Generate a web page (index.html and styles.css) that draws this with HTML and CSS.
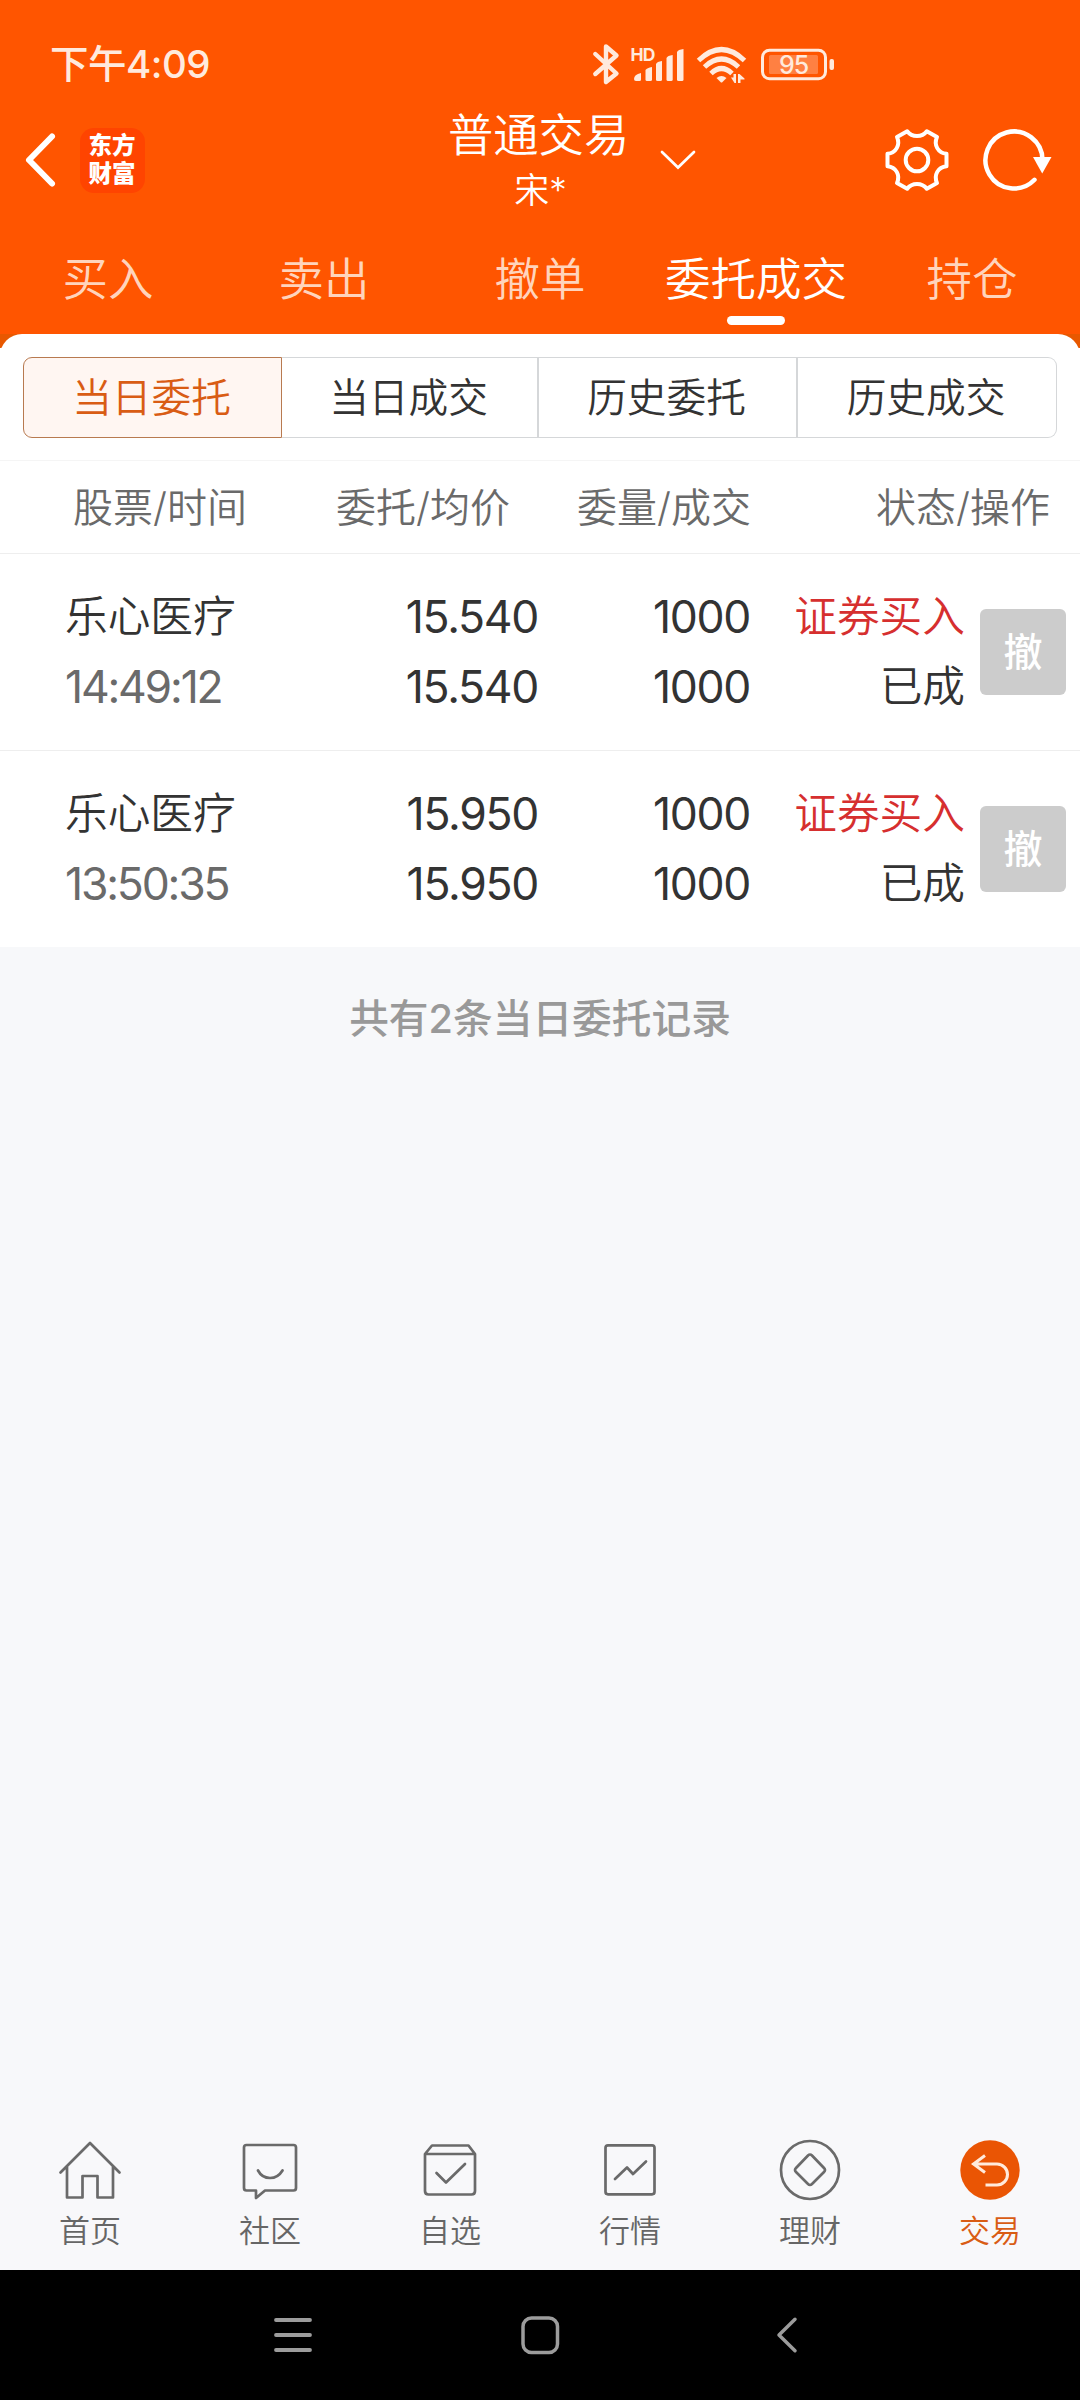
FILE: index.html
```html
<!DOCTYPE html>
<html lang="zh-CN">
<head>
<meta charset="utf-8">
<title>普通交易</title>
<link rel="stylesheet" href="styles.css">
</head>
<body>
<div class="app">
  <header class="header">
    <div class="status">
      <span class="clock">下午4:09</span>
      <svg class="status-icons" width="246" height="46" viewBox="590 42 246 46" fill="none">
        <path d="M595.3 54 L616.5 73.500 L606 82 V46.500 L616.5 55.500 L595.300 74" stroke="#ffeadd" stroke-width="4.400" stroke-linejoin="round" stroke-linecap="round"/>
        <text class="hd" x="630.500" y="60.800">HD</text>
        <g fill="#ffeadd">
          <path d="M634 79 Q634 74.500 641 73 V79.500 Q641 81 639.500 81 H636 Q634 81 634 79Z"/>
          <path d="M645.500 70 Q647 68 652 67 V79.500 Q652 81 650.500 81 H647 Q645.500 81 645.500 79.500Z"/>
          <path d="M656 64 Q657 61.500 662 61 V79.500 Q662 81 660.500 81 H657.500 Q656 81 656 79.500Z"/>
          <path d="M666.500 58 Q667.500 55.500 672.700 55 V79.500 Q672.700 81 671.200 81 H668 Q666.500 81 666.500 79.500Z"/>
          <path d="M677 52 Q678 49.500 683.500 49 V79.500 Q683.500 81 682 81 H678.500 Q677 81 677 79.500Z"/>
          <path d="M716.500 78 Q721.500 74 726.500 78 L722.500 82 Q721.500 83 720.500 82Z"/>
          <path d="M731 77.500 H733.500 V74 H736 V83 H734.500Z M738 83 V74 H739.500 L744.500 78.500 V79.500 H740.500 V83Z"/>
        </g>
        <g stroke="#ffeadd" stroke-width="5">
          <path d="M698.500 60.500 Q721.500 38.500 744.500 60.500"/>
          <path d="M704.500 67 Q721.500 51 738.500 67"/>
          <path d="M711 73.500 Q721.500 63.500 732 73.500"/>
        </g>
        <rect x="762.500" y="50.200" width="63" height="28.600" rx="7" stroke="#ffeadd" stroke-width="3"/>
        <rect x="769" y="55" width="49" height="19" rx="1.500" fill="#ff8042"/>
        <rect x="829.500" y="59" width="4.500" height="11" rx="2" fill="#ffeadd"/>
        <text class="battery" x="793.500" y="73.800" text-anchor="middle">95</text>
      </svg>
    </div>
    <div class="titlebar">
      <div class="left">
        <svg width="34" height="60" viewBox="0 0 34 60" fill="none" stroke="#fff" stroke-width="6" stroke-linecap="round" stroke-linejoin="round"><path d="M28 6.500 L5 30 L28 53.500"/></svg>
        <div class="logo"><span>东方</span><span>财富</span></div>
      </div>
      <div class="title"><h1>普通交易</h1><p>宋*</p></div>
      <div class="right">
        <svg class="caret" width="38" height="22" viewBox="0 0 38 22" fill="none" stroke="#fff" stroke-width="2.700" stroke-linecap="round"><path d="M3 3 L19 18.500 L35 3"/></svg>
        <svg class="gear" width="70" height="70" viewBox="-35 -35 70 70" fill="none" stroke="#fff" stroke-width="4" stroke-linejoin="round">
          <path d="M-9.800 -28.800 C-5 -22.500 5 -22.500 9.800 -28.800 L20 -23 C16.500 -15 21 -6.900 29.500 -6.200 V6.200 C21 6.900 16.500 15 20 23 L9.800 28.800 C5 22.500 -5 22.500 -9.800 28.800 L-20 23 C-16.500 15 -21 6.900 -29.500 6.200 V-6.200 C-21 -6.900 -16.500 -15 -20 -23Z"/>
          <circle r="11.300"/>
        </svg>
        <svg class="refresh" width="74" height="70" viewBox="-35 -35 74 70" fill="none"><path d="M20.500 19.800 A28.500 28.500 0 1 1 28.500 0" stroke="#fff" stroke-width="4.500" stroke-linecap="round"/><path d="M19 -3 H37.500 L28.200 13.500Z" fill="#fff"/></svg>
      </div>
    </div>
    <nav class="tabs">
      <span>买入</span><span>卖出</span><span>撤单</span><span class="on">委托成交</span><span>持仓</span>
    </nav>
  </header>

  <main class="content">
    <div class="corner-bg">
      <section class="panel">
        <div class="segments">
          <span class="on">当日委托</span><span>当日成交</span><span>历史委托</span><span>历史成交</span>
        </div>
        <div class="thead"><span>股票/时间</span><span>委托/均价</span><span>委量/成交</span><span>状态/操作</span></div>
        <div class="row">
          <div class="cell name"><b>乐心医疗</b><b class="time">14:49:12</b></div>
          <div class="cell"><b>15.540</b><b>15.540</b></div>
          <div class="cell"><b>1000</b><b>1000</b></div>
          <div class="cell"><b class="buy">证券买入</b><b>已成</b></div>
          <button class="cancel">撤</button>
        </div>
        <div class="row">
          <div class="cell name"><b>乐心医疗</b><b class="time">13:50:35</b></div>
          <div class="cell"><b>15.950</b><b>15.950</b></div>
          <div class="cell"><b>1000</b><b>1000</b></div>
          <div class="cell"><b class="buy">证券买入</b><b>已成</b></div>
          <button class="cancel">撤</button>
        </div>
      </section>
    </div>
    <p class="summary">共有2条当日委托记录</p>
  </main>

  <nav class="bottom">
    <a><svg viewBox="-35 -35 70 70"><path d="M-29.500 2.500 L0 -27 L29.500 2.500 M-23 -3 V27.500 H-7.500 V6 H7.500 V27.500 H23 V-3"/></svg>首页</a>
    <a><svg viewBox="-35 -35 70 70"><path d="M-23.500 -25 H23.500 Q26 -25 26 -22.500 V18 Q26 20.500 23.500 20.500 H-5 L-14 28 V20.500 H-23.500 Q-26 20.500 -26 18 V-22.500 Q-26 -25 -23.500 -25Z M-12 0.500 Q-8 8 0 8 Q8 8 12.500 0.500"/></svg>社区</a>
    <a><svg viewBox="-35 -35 70 70"><path d="M-25 -16 L-18 -24.500 H18.500 L25 -16 V21 Q25 24.500 21.500 24.500 H-21.500 Q-25 24.500 -25 21Z M-25 -16 H25 M-13.500 3 L-4 12.500 L15 -6"/></svg>自选</a>
    <a><svg viewBox="-35 -35 70 70"><rect x="-24.500" y="-24.700" width="49" height="49" rx="2.500"/><path d="M-15 9 L-3 -2.500 L3 4 L16 -8.500"/></svg>行情</a>
    <a><svg viewBox="-35 -35 70 70"><circle r="29"/><path d="M-14 -2 L-2 -14.500 Q0 -16.500 2 -14.500 L14 -2 Q16 0 14 2 L2 14 Q0 16 -2 14 L-14 2 Q-16 0 -14 -2Z"/></svg>理财</a>
    <a class="on"><svg viewBox="-35 -35 70 70"><circle class="disc" r="29.700"/><path class="arrow" d="M-5 -14.500 L-16.500 -6 L-5 2.500 M-15 -6 H7 A10.500 10.500 0 0 1 7 15 H-4.500"/></svg>交易</a>
  </nav>

  <footer class="system">
    <svg width="44" height="44" viewBox="-22 -22 44 44" stroke-width="3.800"><path d="M-17 -15 H17 M-17 0 H17 M-17 15 H17"/></svg>
    <svg width="44" height="44" viewBox="-22 -22 44 44" stroke-width="3.500"><rect x="-17" y="-17" width="34.500" height="34.500" rx="8.500"/></svg>
    <svg width="44" height="44" viewBox="-22 -22 44 44" stroke-width="3.500"><path d="M8 -15.700 L-8 0 L8 15.700"/></svg>
  </footer>
</div>
</body>
</html>
```
FILE: styles.css
```css
* { box-sizing: border-box; margin: 0; padding: 0; }
body {
  width: 1080px;
  font-family: Inter, "Noto Sans CJK SC", sans-serif;
  font-weight: 350;
  color: #333;
}
svg { display: block; flex: none; }
.app { width: 1080px; height: 2400px; display: flex; flex-direction: column; background: #f7f8fa; overflow: hidden; }

.header { height: 334px; flex: none; background: #ff5500; color: #fff; }
.status { height: 100px; padding: 42px 244px 0 50px; display: flex; justify-content: space-between; color: #ffeadd; }
.clock { font-size: 38.500px; font-weight: 500; line-height: 44px; white-space: nowrap; letter-spacing: -.5px; }
.hd { font-size: 17.500px; font-weight: 700; fill: #ffeadd; letter-spacing: -.7px; }
.battery { font-size: 25px; font-weight: 500; fill: #ffeadd; letter-spacing: -1px; }

.titlebar { height: 120px; display: grid; grid-template-columns: 448px 180px 1fr; align-items: center; }
.left { display: flex; align-items: center; gap: 22px; padding-left: 24px; }
.logo {
  width: 65px; height: 65px; border-radius: 14px; background: #ff4400;
  display: flex; flex-direction: column; align-items: center; justify-content: center;
  font-size: 23.500px; font-weight: 900; line-height: 28px; padding-right: 1px;
}
.title { text-align: center; white-space: nowrap; }
.title h1 { font-size: 45.300px; font-weight: 350; line-height: 54px; padding-top: 6px; }
.title p { font-size: 35px; line-height: 50px; padding: 2px 0 3px 5px; }
.right { display: flex; align-items: center; height: 70px; }
.caret { margin-left: 31px; }
.gear { margin-left: 185px; }
.refresh { margin-left: 27px; }

.tabs { display: grid; grid-template-columns: repeat(5, 1fr); height: 114px; }
.tabs span { display: flex; flex-direction: column; align-items: center; padding-top: 30px; font-size: 45.500px; line-height: 60px; color: #ffd4bc; white-space: nowrap; }
.tabs .on { color: #fff; }
.tabs .on::after { content: ""; width: 58px; height: 9px; margin-top: 6px; border-radius: 4.500px; background: #fff; }

.content { flex: 1; }
.corner-bg { background: linear-gradient(#e85800 14px, #fff 14px); }
.panel { background: #fff; border-radius: 22px 22px 0 0; padding-top: 23px; height: 613px; }
.segments { margin: 0 23px; height: 81px; display: grid; grid-template-columns: 259px 257px 259px 1fr; }
.segments span { border: 1px solid #d5d7d9; border-left-width: 0; display: flex; align-items: center; justify-content: center; font-size: 39.700px; padding: 0 2px 6px 0; }
.segments span:last-child { border-radius: 0 9px 9px 0; }
.segments span:nth-child(2), .segments span:nth-child(3) { border-right-width: 2px; }
.segments .on { border: 1px solid #b87a50; border-radius: 9px 0 0 9px; background: #fff6f2; color: #d95c14; }
.thead {
  margin-top: 22px; height: 94px; padding: 0 30px 5px 73px; border-top: 1px solid #f5f5f5; border-bottom: 1px solid #eee;
  display: grid; grid-template-columns: 263px 241px 298px 1fr; align-items: center;
  font-size: 40px; color: #6a6a6a; white-space: nowrap;
}
.thead span:last-child { justify-self: end; margin-left: -20px; }
.row {
  height: 197px; padding: 0 14px 0 65px; border-bottom: 1px solid #eee;
  display: grid; grid-template-columns: 200px 273px 212px 215px 1fr; align-items: center;
}
.row:last-child { border-bottom: 0; height: 196px; }
.cell { text-align: right; white-space: nowrap; font-size: 44.500px; }
.cell.name { text-align: left; }
.cell b { display: block; font-weight: 400; height: 70px; line-height: 70px; letter-spacing: -1.300px; }
.cell.name b:first-child, .cell:nth-child(4) b { font-size: 42.700px; font-weight: 350; letter-spacing: 0; }
.cell.name .time { color: #6a6a6a; letter-spacing: -2.200px; }
.cell .buy { color: #d62f2f; }
.cancel { justify-self: end; width: 86px; height: 86px; border: 0; border-radius: 6px; background: #ccc; color: #fff; font: 500 39px/86px Inter, "Noto Sans CJK SC", sans-serif; }
.summary { margin-top: 42px; text-align: center; font-size: 39.700px; font-weight: 500; line-height: 60px; color: #999; }

.bottom { height: 160px; padding-top: 25px; display: grid; grid-template-columns: repeat(6, 1fr); background: #f8f8fa; flex: none; }
.bottom a { display: flex; flex-direction: column; align-items: center; font-size: 31px; line-height: 52px; color: #666; }
.bottom svg { width: 70px; height: 70px; fill: none; stroke: #6a6a6a; stroke-width: 2.700px; stroke-linecap: round; stroke-linejoin: round; }
.bottom .on { color: #d95c14; }
.bottom .disc { fill: #ea5504; stroke: none; }
.bottom .arrow { stroke: #ffeadb; stroke-width: 3px; stroke-linecap: butt; stroke-linejoin: miter; }

.system { height: 130px; flex: none; background: #000; display: flex; justify-content: center; gap: 203px; padding: 43px 1px 0 0; }
.system svg { fill: none; stroke: #9c9c9c; stroke-linecap: round; stroke-linejoin: round; }
```
